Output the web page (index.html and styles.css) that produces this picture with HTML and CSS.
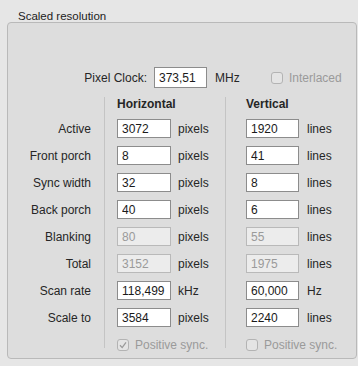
FILE: index.html
```html
<!DOCTYPE html>
<html lang="en">
<head>
    <meta charset="UTF-8">
    <title>Scaled resolution</title>
    <link rel="stylesheet" href="styles.css">
</head>
<body>
    <div class="panel">
        <div class="title">Scaled resolution</div>
        <div class="box">
            <div class="clock-row">
                <span class="clock-label">Pixel Clock:</span>
                <input class="field clock" type="text" value="373,51">
                <span class="clock-unit">MHz</span>
                <span class="check off"></span>
                <span class="check-text">Interlaced</span>
            </div>

            <div class="timing">
                <div class="labels">
                    <div class="head"></div>
                    <div class="row">Active</div>
                    <div class="row">Front porch</div>
                    <div class="row">Sync width</div>
                    <div class="row">Back porch</div>
                    <div class="row">Blanking</div>
                    <div class="row">Total</div>
                    <div class="row">Scan rate</div>
                    <div class="row">Scale to</div>
                </div>

                <div class="col horiz">
                    <div class="head">Horizontal</div>
                    <div class="row"><input class="field" value="3072"><span class="unit">pixels</span></div>
                    <div class="row"><input class="field" value="8"><span class="unit">pixels</span></div>
                    <div class="row"><input class="field" value="32"><span class="unit">pixels</span></div>
                    <div class="row"><input class="field" value="40"><span class="unit">pixels</span></div>
                    <div class="row"><input class="field disabled" value="80" disabled><span class="unit">pixels</span></div>
                    <div class="row"><input class="field disabled" value="3152" disabled><span class="unit">pixels</span></div>
                    <div class="row"><input class="field" value="118,499"><span class="unit">kHz</span></div>
                    <div class="row"><input class="field" value="3584"><span class="unit">pixels</span></div>
                    <div class="sync">
                        <span class="check on">
                            <svg width="10" height="10" viewBox="0 0 10 10"><path d="M2 5.2 L4.2 7.6 L8 2.4" fill="none" stroke="#9a9a9a" stroke-width="1.3"/></svg>
                        </span>
                        <span class="check-text">Positive sync.</span>
                    </div>
                </div>

                <div class="col vert">
                    <div class="head">Vertical</div>
                    <div class="row"><input class="field" value="1920"><span class="unit">lines</span></div>
                    <div class="row"><input class="field" value="41"><span class="unit">lines</span></div>
                    <div class="row"><input class="field" value="8"><span class="unit">lines</span></div>
                    <div class="row"><input class="field" value="6"><span class="unit">lines</span></div>
                    <div class="row"><input class="field disabled" value="55" disabled><span class="unit">lines</span></div>
                    <div class="row"><input class="field disabled" value="1975" disabled><span class="unit">lines</span></div>
                    <div class="row"><input class="field" value="60,000"><span class="unit">Hz</span></div>
                    <div class="row"><input class="field" value="2240"><span class="unit">lines</span></div>
                    <div class="sync">
                        <span class="check off"></span>
                        <span class="check-text">Positive sync.</span>
                    </div>
                </div>
            </div>
        </div>
    </div>
</body>
</html>
```

FILE: styles.css
```css
* {
    box-sizing: border-box;
}

body {
    margin: 0;
    background: #e6e6e6;
    font-family: "Liberation Sans", Arial, sans-serif;
    font-size: 12px;
    color: #262626;
}

.panel {
    padding: 10px 1px 0 7px;
}

.title {
    padding-left: 11px;
    font-size: 11.5px;
    line-height: 12px;
    color: #222;
}

.box {
    margin-top: 0;
    height: 337px;
    border: 1px solid #b9b9b9;
    border-radius: 4px;
    background: #dddddd;
    padding: 44px 0 0 0;
}

.clock-row {
    display: flex;
    align-items: center;
    height: 21px;
}

.clock-label {
    width: 139px;
    text-align: right;
}

.field {
    height: 19px;
    width: 54px;
    margin: 0;
    padding: 0 0 0 4px;
    border: 1px solid #8c8c8c;
    background: #ffffff;
    font-family: "Liberation Sans", Arial, sans-serif;
    font-size: 12px;
    color: #1a1a1a;
    outline: none;
}

.field.clock {
    height: 21px;
    width: 53px;
    margin-left: 7px;
}

.field.disabled {
    background: #ececec;
    border-color: #b9b9b9;
    color: #9a9a9a;
}

.clock-unit {
    width: 64px;
    padding-left: 8px;
}

.check {
    display: inline-flex;
    align-items: center;
    justify-content: center;
    width: 12px;
    height: 12px;
    border: 1px solid #b3b3b3;
    border-radius: 3px;
    background: #e4e4e4;
}

.check-text {
    margin-left: 6px;
    color: #9a9a9a;
}

.timing {
    display: flex;
    margin-top: 9px;
}

.labels {
    width: 96px;
    text-align: right;
    padding-right: 13px;
}

.col {
    border-left: 1px solid #c4c4c4;
    height: 251px;
}

.horiz {
    width: 121px;
    padding-left: 12px;
}

.vert {
    padding-left: 20px;
}

.head {
    height: 18px;
    line-height: 14px;
    font-weight: bold;
}

.row {
    display: flex;
    align-items: center;
    justify-content: flex-end;
    height: 27px;
}

.col .row {
    justify-content: flex-start;
}

.vert .field {
    width: 53px;
}

.unit {
    margin-left: 7px;
}

.vert .unit {
    margin-left: 8px;
}

.sync {
    display: flex;
    align-items: center;
    height: 22px;
    padding-top: 6px;
}
```
